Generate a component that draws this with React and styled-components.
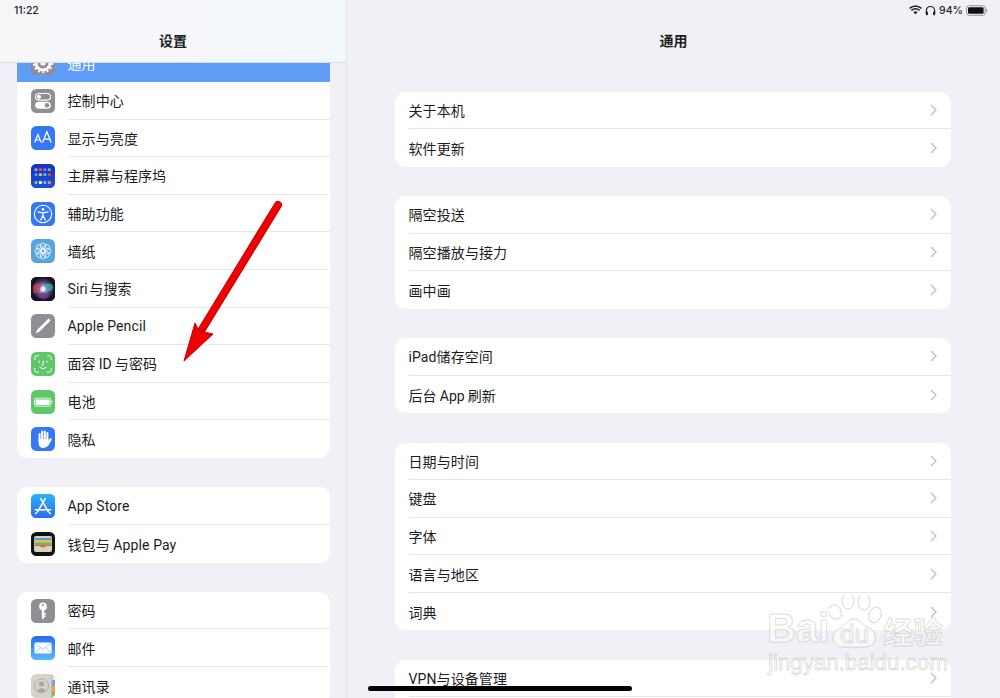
import React from 'react';
import styled, { createGlobalStyle } from 'styled-components';

const GlobalStyle = createGlobalStyle`
    html, body {
        margin: 0;
        padding: 0;
        width: 1000px;
        height: 698px;
        overflow: hidden;
        background: #f0f0f6;
        font-family: "Roboto", "Noto Sans CJK SC", sans-serif;
        color: #1c1c1e;
    }
`;

const Page = styled.div`
    position: relative;
    width: 1000px;
    height: 698px;
    display: flex;
    overflow: hidden;
    background: #f0f0f6;
`;

const Sidebar = styled.aside`
    position: relative;
    width: 347px;
    height: 698px;
    flex-shrink: 0;
    overflow: hidden;
    box-sizing: border-box;
    border-right: 1px solid #e3e3e8;
`;

const SidebarHeader = styled.header`
    position: absolute;
    top: 0;
    left: 0;
    right: 0;
    height: 62.5px;
    box-sizing: border-box;
    padding-top: 33px;
    background: linear-gradient(100deg, #f6f6f9 0%, #f5f7fa 55%, #f1f7fb 100%);
    border-bottom: 1px solid #d9d9dc;
    text-align: center;
    z-index: 2;
`;

const Title = styled.h1`
    margin: 0;
    font-size: 14px;
    line-height: 16px;
    font-weight: 600;
    color: #1c1c1e;
`;

const SidebarList = styled.div`
    display: flex;
    flex-direction: column;
    gap: 29.4px;
    padding: 44.4px 16px 0 17px;
`;

const Group = styled.section`
    border-radius: 11px;
    background: #fff;
    overflow: hidden;
`;

const SideRow = styled.div`
    height: 37.6px;
    display: flex;
    align-items: center;
    gap: 13px;
    padding-left: 13.5px;
    background: ${p => (p.$active ? '#5f9df6' : 'transparent')};
    color: ${p => (p.$active ? '#fff' : '#1c1c1e')};
`;

const Tile = styled.div`
    width: 24px;
    height: 24px;
    flex-shrink: 0;
    border-radius: 5.5px;
    overflow: hidden;
    background: ${p => p.$bg};
    svg {
        display: block;
    }
`;

const SideLabel = styled.div`
    flex: 1;
    height: 100%;
    display: flex;
    align-items: center;
    font-size: 14px;
    letter-spacing: 0.1px;
    box-sizing: border-box;
    border-bottom: ${p => (p.$last || p.$active ? 'none' : '1px solid #e6e6ea')};
`;

const Detail = styled.main`
    flex: 1;
    height: 698px;
    overflow: hidden;
`;

const DetailHeader = styled.header`
    height: 62px;
    box-sizing: border-box;
    padding-top: 33px;
    text-align: center;
`;

const DetailList = styled.div`
    display: flex;
    flex-direction: column;
    gap: 29.2px;
    padding: 29.8px 49px 0 48px;
`;

const DetailRow = styled.div`
    height: 37.6px;
    margin-left: 13.5px;
    padding-right: 14px;
    display: flex;
    align-items: center;
    justify-content: space-between;
    box-sizing: border-box;
    font-size: 14px;
    letter-spacing: 0.1px;
    border-bottom: ${p => (p.$last ? 'none' : '1px solid #e6e6ea')};
`;

const StatusBar = styled.div`
    position: absolute;
    top: 0;
    left: 0;
    right: 0;
    height: 20px;
    padding: 0 13px 0 14px;
    display: flex;
    align-items: center;
    justify-content: space-between;
    font-family: "Inter", sans-serif;
    font-size: 10.5px;
    font-weight: 500;
    color: #1c1c1e;
    z-index: 3;
`;

const StatusRight = styled.div`
    display: flex;
    align-items: center;
    gap: 3px;
`;

const HomeBar = styled.div`
    position: absolute;
    left: 368px;
    bottom: 7px;
    width: 264px;
    height: 5px;
    border-radius: 3px;
    background: #000;
    z-index: 3;
`;

const Arrow = styled.svg`
    position: absolute;
    left: 0;
    top: 0;
    z-index: 4;
    pointer-events: none;
`;

const Watermark = styled.div`
    position: absolute;
    left: 767px;
    top: 595px;
    width: 184px;
    z-index: 5;
    font-family: "Liberation Sans", sans-serif;
    color: rgba(255, 255, 255, 0.6);
    -webkit-text-stroke: 1px rgba(175, 175, 175, 0.42);
`;

const MarkTop = styled.div`
    display: flex;
    align-items: flex-end;
    height: 54px;
`;

const MarkLatin = styled.span`
    font-size: 40px;
    line-height: 42px;
    font-weight: bold;
    width: 62px;
`;

const Paw = styled.div`
    position: relative;
    width: 54px;
    height: 54px;
    flex-shrink: 0;
`;

const MarkDu = styled.span`
    position: absolute;
    left: 11px;
    top: 26px;
    font-size: 26px;
    line-height: 26px;
`;

const MarkCjk = styled.span`
    font-family: "Noto Sans CJK SC", sans-serif;
    font-size: 30px;
    line-height: 38px;
    font-weight: 700;
    white-space: nowrap;
`;

const MarkDomain = styled.div`
    font-size: 22.3px;
    line-height: 28px;
    margin-left: 1px;
    white-space: nowrap;
`;

const W = { fill: '#fff' };

const Glyph = ({ children }) => (
    <svg width="24" height="24" viewBox="0 0 24 24">{children}</svg>
);

const GearIcon = () => (
    <Glyph>
        <circle cx="12" cy="12" r="7" fill="none" stroke="#fff" strokeWidth="3" />
        <circle cx="12" cy="12" r="9.2" fill="none" stroke="#fff" strokeWidth="2" strokeDasharray="2 2.33" />
        <circle cx="12" cy="12" r="2.6" fill="#fff" />
    </Glyph>
);

const ControlIcon = () => (
    <Glyph>
        <rect x="4.5" y="4.5" width="15" height="6.6" rx="3.3" fill="none" stroke="#fff" strokeWidth="1.1" />
        <circle cx="8" cy="7.8" r="2.1" {...W} />
        <rect x="4.2" y="12.8" width="15.6" height="7" rx="3.5" {...W} />
        <circle cx="16" cy="16.3" r="2.3" fill="#8e8e93" />
    </Glyph>
);

const TextSizeIcon = () => (
    <Glyph>
        <path d="M3.6 16.6 L6.9 8.6 L10.2 16.6 M4.8 14 H9" fill="none" stroke="#fff" strokeWidth="1.2" />
        <path d="M11.6 16.6 L15.9 5.8 L20.2 16.6 M13 13.2 H18.8" fill="none" stroke="#fff" strokeWidth="1.3" />
    </Glyph>
);

const dotColors = ['#8ea7f2', '#e4574f', '#a66cf0', '#69c35f', '#42a7ee', '#f3c244', '#4fc7c9', '#e8483f'];
const dockColors = ['#7ed36a', '#fff', '#7fb6f5', '#f09a3c'];

const HomeScreenIcon = () => (
    <svg width="24" height="24" viewBox="0 0 24 24">
        <defs>
            <linearGradient id="homeBg" x1="0" y1="0" x2="0" y2="1">
                <stop offset="0" stopColor="#1b2fb8" />
                <stop offset="1" stopColor="#1d52d8" />
            </linearGradient>
        </defs>
        <rect width="24" height="24" fill="url(#homeBg)" />
        {dotColors.map((c, i) => (
            <rect key={i} x={3.6 + (i % 4) * 4.4} y={i < 4 ? 4.2 : 9.2} width="2.9" height="2.9" rx="0.7" fill={c} />
        ))}
        {dockColors.map((c, i) => (
            <rect key={i} x={3.6 + i * 4.4} y="17" width="2.9" height="2.9" rx="0.7" fill={c} />
        ))}
    </svg>
);

const AccessIcon = () => (
    <Glyph>
        <circle cx="12" cy="12" r="8.7" fill="none" stroke="#fff" strokeWidth="1.1" />
        <circle cx="12" cy="7.4" r="1.4" {...W} />
        <path d="M7 9.8 L10.3 10.6 H13.7 L17 9.8 M12 10.6 V13.6 M12 13.4 L9.8 18 M12 13.4 L14.2 18" fill="none" stroke="#fff" strokeWidth="1.3" strokeLinecap="round" />
    </Glyph>
);

const petals = [0, 45, 90, 135, 180, 225, 270, 315];

const WallpaperIcon = () => (
    <Glyph>
        {petals.map(a => (
            <circle key={a} cx="12" cy="7" r="2.9" fill="none" stroke="#fff" strokeWidth="0.8" transform={`rotate(${a} 12 12)`} />
        ))}
        <circle cx="12" cy="12" r="1.7" fill="none" stroke="#fff" strokeWidth="0.8" />
    </Glyph>
);

const SiriIcon = () => (
    <svg width="24" height="24" viewBox="0 0 24 24">
        <defs>
            <radialGradient id="siriRing" cx="0.5" cy="0.5" r="0.5">
                <stop offset="0" stopColor="#e2f2ff" />
                <stop offset="0.28" stopColor="#8fa6d4" />
                <stop offset="0.62" stopColor="#5a4478" />
                <stop offset="1" stopColor="#1c1a2c" />
            </radialGradient>
        </defs>
        <rect width="24" height="24" fill="#14141e" />
        <circle cx="12" cy="12" r="11" fill="url(#siriRing)" />
        <path d="M2 9 C6 4 10 6 12 12 C8 15 5 17 2.6 16 Z" fill="#d83c5c" opacity="0.72" />
        <path d="M12 12 C14 6 19 5 22 9 C22.4 14 18 16 12 12 Z" fill="#3bb4c4" opacity="0.7" />
        <path d="M7 19 C10 14 14 14 18 19 C14 23 10 22.5 7 19 Z" fill="#7c3a92" opacity="0.7" />
        <circle cx="12" cy="12" r="2.6" fill="#eef7ff" opacity="0.85" />
    </svg>
);

const PencilIcon = () => (
    <Glyph>
        <path d="M17.6 4.6 L19.6 6.4 L8.6 17.6 L4.6 19.4 L6.4 15.6 Z" {...W} />
    </Glyph>
);

const FaceIdIcon = () => (
    <Glyph>
        <path d="M3.8 8 V5.8 Q3.8 3.8 5.8 3.8 H8 M16 3.8 H18.2 Q20.2 3.8 20.2 5.8 V8 M20.2 16 V18.2 Q20.2 20.2 18.2 20.2 H16 M8 20.2 H5.8 Q3.8 20.2 3.8 18.2 V16" fill="none" stroke="#fff" strokeWidth="0.9" />
        <path d="M8.2 9 V10.6 M15.8 9 V10.6 M12.2 9 V12.6 Q12.2 13.6 11 13.6 M8.8 15.6 Q12 18 15.2 15.6" fill="none" stroke="#fff" strokeWidth="1" strokeLinecap="round" />
    </Glyph>
);

const BatteryIcon = () => (
    <Glyph>
        <rect x="3.4" y="8.2" width="16.4" height="8" rx="1.8" fill="none" stroke="#fff" strokeWidth="0.8" />
        <rect x="4.6" y="9.4" width="14" height="5.6" rx="0.8" {...W} />
        <rect x="20.4" y="10.8" width="0.8" height="2.6" rx="0.4" {...W} />
    </Glyph>
);

const HandIcon = () => (
    <Glyph>
        <path d="M8.6 7 V14 M11.2 4.6 V13 M13.8 4.4 V13 M16.4 6 V14" fill="none" stroke="#fff" strokeWidth="2" strokeLinecap="round" />
        <path d="M7.6 12 H17.4 V13.6 L18.6 11.8 Q19.6 10.8 20.6 11.6 Q21 12.2 20.6 13 L17.6 18.2 Q15.8 21 12.4 21 Q7.6 21 7.6 16 Z" {...W} />
    </Glyph>
);

const AppStoreIcon = () => (
    <svg width="24" height="24" viewBox="0 0 24 24">
        <defs>
            <linearGradient id="storeBg" x1="0" y1="0" x2="0" y2="1">
                <stop offset="0" stopColor="#2cb2f6" />
                <stop offset="1" stopColor="#2a6cf0" />
            </linearGradient>
        </defs>
        <rect width="24" height="24" fill="url(#storeBg)" />
        <path d="M9.8 4.6 L17.4 17.8 M14.2 4.6 L6.6 17.8 M4.4 15.8 H19.6 M5.4 18.6 L4.8 19.6 M18.6 18.6 L19.2 19.6" fill="none" stroke="#fff" strokeWidth="1.5" strokeLinecap="round" />
    </svg>
);

const WalletIcon = () => (
    <Glyph>
        <rect x="3" y="4" width="18" height="16" rx="2" fill="#d8d2c2" />
        <rect x="3.4" y="6" width="17.2" height="2.3" fill="#4a9de0" />
        <rect x="3.4" y="8.3" width="17.2" height="2.3" fill="#f2b93b" />
        <rect x="3.4" y="10.6" width="17.2" height="2.3" fill="#62b85c" />
        <path d="M3.4 12.9 H20.6 V14 H15 Q12 17 9 14 H3.4 Z" fill="#e8604c" />
    </Glyph>
);

const KeyIcon = () => (
    <Glyph>
        <circle cx="12" cy="7.4" r="3.9" {...W} />
        <path d="M10.8 10 H13.2 V19 L12 20.6 L10.8 19 Z M13 14 H15 V15.6 H13 Z M13 16.6 H14.6 V18 H13 Z" {...W} />
        <circle cx="12" cy="6" r="1.1" fill="#8e8e93" />
    </Glyph>
);

const MailIcon = () => (
    <svg width="24" height="24" viewBox="0 0 24 24">
        <defs>
            <linearGradient id="mailBg" x1="0" y1="0" x2="0" y2="1">
                <stop offset="0" stopColor="#2a6cf2" />
                <stop offset="1" stopColor="#56bdf9" />
            </linearGradient>
        </defs>
        <rect width="24" height="24" fill="url(#mailBg)" />
        <rect x="3.4" y="6.6" width="17.2" height="11" rx="1.4" {...W} />
        <path d="M3.8 7.2 L12 13.4 L20.2 7.2 M3.8 17 L9.4 11.6 M20.2 17 L14.6 11.6" fill="none" stroke="#7cbcf5" strokeWidth="0.7" />
    </svg>
);

const ContactsIcon = () => (
    <Glyph>
        <rect x="21" y="0" width="3" height="6" fill="#e8e3d5" />
        <rect x="21" y="6" width="3" height="6" fill="#62aef0" />
        <rect x="21" y="12" width="3" height="6" fill="#f0a23c" />
        <rect x="21" y="18" width="3" height="6" fill="#6cc45c" />
        <rect x="20.5" y="0" width="0.7" height="24" fill="#a9a69c" />
        <circle cx="10.5" cy="12" r="7" fill="none" stroke="#a8a69e" strokeWidth="0.8" />
        <circle cx="10.5" cy="10" r="2.6" fill="#a8a69e" />
        <path d="M6 16.6 Q10.5 11.6 15 16.6 Q10.5 20.4 6 16.6 Z" fill="#a8a69e" />
    </Glyph>
);

const Chevron = () => (
    <svg width="7" height="12" viewBox="0 0 7 12">
        <path d="M1 1 L6 6 L1 11" fill="none" stroke="#c2c2c6" strokeWidth="1.4" />
    </svg>
);

const sideGroups = [
    [
        { label: '通用', bg: '#8e8e93', Icon: GearIcon, active: true },
        { label: '控制中心', bg: '#8e8e93', Icon: ControlIcon },
        { label: '显示与亮度', bg: '#3478f6', Icon: TextSizeIcon },
        { label: '主屏幕与程序坞', bg: '#1d3fc8', Icon: HomeScreenIcon },
        { label: '辅助功能', bg: '#3478f6', Icon: AccessIcon },
        { label: '墙纸', bg: '#56a6dc', Icon: WallpaperIcon },
        { label: 'Siri\u200a与搜索', bg: '#111118', Icon: SiriIcon },
        { label: 'Apple Pencil', bg: '#8e8e93', Icon: PencilIcon },
        { label: '面容\u2009ID\u2009与密码', bg: '#5fc66a', Icon: FaceIdIcon },
        { label: '电池', bg: '#5fc66a', Icon: BatteryIcon },
        { label: '隐私', bg: '#3478f6', Icon: HandIcon },
    ],
    [
        { label: 'App Store', bg: '#2a8ff2', Icon: AppStoreIcon },
        { label: '钱包与 Apple Pay', bg: '#111', Icon: WalletIcon },
    ],
    [
        { label: '密码', bg: '#8e8e93', Icon: KeyIcon },
        { label: '邮件', bg: '#3a8cf4', Icon: MailIcon },
        { label: '通讯录', bg: '#d4d2c9', Icon: ContactsIcon },
    ],
];

const detailGroups = [
    ['关于本机', '软件更新'],
    ['隔空投送', '隔空播放与接力', '画中画'],
    ['iPad储存空间', '后台\u2009App\u2009刷新'],
    ['日期与时间', '键盘', '字体', '语言与地区', '词典'],
    ['VPN与设备管理', ''],
];

const App = () => (
    <Page>
        <GlobalStyle />
        <Sidebar>
            <SidebarHeader>
                <Title>设置</Title>
            </SidebarHeader>
            <SidebarList>
                {sideGroups.map((rows, g) => (
                    <Group key={g}>
                        {rows.map(({ label, bg, Icon, active }, i) => (
                            <SideRow key={label} $active={active}>
                                <Tile $bg={bg}><Icon /></Tile>
                                <SideLabel $active={active} $last={i === rows.length - 1}>{label}</SideLabel>
                            </SideRow>
                        ))}
                    </Group>
                ))}
            </SidebarList>
        </Sidebar>
        <Detail>
            <DetailHeader>
                <Title>通用</Title>
            </DetailHeader>
            <DetailList>
                {detailGroups.map((rows, g) => (
                    <Group key={g}>
                        {rows.map((label, i) => (
                            <DetailRow key={label} $last={i === rows.length - 1}>
                                {label}
                                <Chevron />
                            </DetailRow>
                        ))}
                    </Group>
                ))}
            </DetailList>
        </Detail>
        <StatusBar>
            <span>11:22</span>
            <StatusRight>
                <svg width="13" height="10" viewBox="0 0 13 10">
                    <path d="M0.6 3.4 Q6.5 -1.4 12.4 3.4 M2.4 5.4 Q6.5 2.2 10.6 5.4" fill="none" stroke="#1c1c1e" strokeWidth="1.5" />
                    <path d="M4.4 7 Q6.5 5.6 8.6 7 L6.5 9.4 Z" fill="#1c1c1e" />
                </svg>
                <svg width="11" height="11" viewBox="0 0 11 11">
                    <path d="M1.4 8 V5.6 a4.1 4.1 0 0 1 8.2 0 V8" fill="none" stroke="#1c1c1e" strokeWidth="1.2" />
                    <rect x="0.8" y="6.4" width="2.2" height="3.8" rx="1" fill="#1c1c1e" />
                    <rect x="8" y="6.4" width="2.2" height="3.8" rx="1" fill="#1c1c1e" />
                </svg>
                <span>94%</span>
                <svg width="21" height="11" viewBox="0 0 21 11">
                    <rect x="0.5" y="0.7" width="18.6" height="9.6" rx="2.6" fill="none" stroke="#8a8a8e" strokeWidth="0.9" />
                    <rect x="2" y="2.2" width="15.6" height="6.6" rx="1.4" fill="#111" />
                    <rect x="20" y="3.8" width="1" height="3.4" rx="0.5" fill="#8a8a8e" />
                </svg>
            </StatusRight>
        </StatusBar>
        <HomeBar />
        <Arrow width="1000" height="698" viewBox="0 0 1000 698">
            <path d="M278 205 L201 331" fill="none" stroke="#c40000" strokeWidth="8" strokeLinecap="round" />
            <path d="M278 205 L201 331" fill="none" stroke="#f00000" strokeWidth="6" strokeLinecap="round" />
            <path d="M195 323 L199 331 L213 334 L184 361 Z" fill="#f00000" stroke="#c40000" strokeWidth="1" strokeLinejoin="round" />
        </Arrow>
        <Watermark>
            <MarkTop>
                <MarkLatin>Bai</MarkLatin>
                <Paw>
                    <svg width="54" height="54" viewBox="0 0 54 54" fill="rgba(255,255,255,0.6)" stroke="rgba(175,175,175,0.5)" strokeWidth="1">
                        <ellipse cx="6" cy="17" rx="6" ry="7.5" transform="rotate(-25 6 17)" />
                        <ellipse cx="19" cy="6" rx="6" ry="8" />
                        <ellipse cx="35" cy="7" rx="6" ry="8" />
                        <ellipse cx="46" cy="20" rx="6" ry="8" transform="rotate(25 46 20)" />
                        <path d="M25 24 C31 24 33 30 40 33 C50 38 48 52 36 52 H14 C3 52 0 39 10 34 C17 31 18 24 25 24 Z" />
                    </svg>
                    <MarkDu>du</MarkDu>
                </Paw>
                <MarkCjk>经验</MarkCjk>
            </MarkTop>
            <MarkDomain>jingyan.baidu.com</MarkDomain>
        </Watermark>
    </Page>
);

export default App;
